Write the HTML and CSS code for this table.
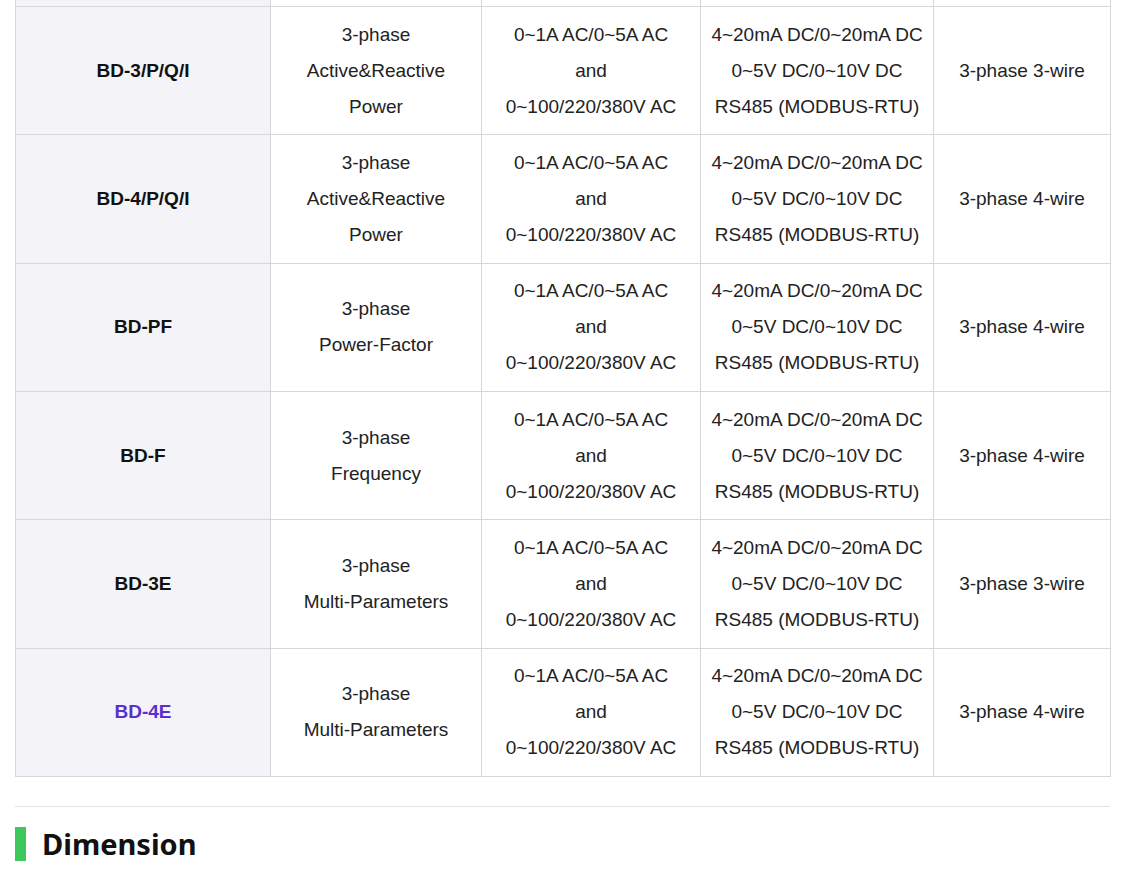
FILE: index.html
```html
<!DOCTYPE html>
<html>
<head>
<meta charset="utf-8">
<link rel="stylesheet" href="styles.css">
</head>
<body>
<div class="page">
  <table class="spec">
    <colgroup>
      <col class="c1"><col class="c2"><col class="c3"><col class="c4"><col class="c5">
    </colgroup>
    <tbody>
      <tr class="cut"><td class="model"></td><td></td><td></td><td></td><td></td></tr>
      <tr>
        <td class="model">BD-3/P/Q/I</td>
        <td>3-phase<br>Active&amp;Reactive<br>Power</td>
        <td>0~1A AC/0~5A AC<br>and<br>0~100/220/380V AC</td>
        <td>4~20mA DC/0~20mA DC<br>0~5V DC/0~10V DC<br>RS485 (MODBUS-RTU)</td>
        <td>3-phase 3-wire</td>
      </tr>
      <tr>
        <td class="model">BD-4/P/Q/I</td>
        <td>3-phase<br>Active&amp;Reactive<br>Power</td>
        <td>0~1A AC/0~5A AC<br>and<br>0~100/220/380V AC</td>
        <td>4~20mA DC/0~20mA DC<br>0~5V DC/0~10V DC<br>RS485 (MODBUS-RTU)</td>
        <td>3-phase 4-wire</td>
      </tr>
      <tr>
        <td class="model">BD-PF</td>
        <td>3-phase<br>Power-Factor</td>
        <td>0~1A AC/0~5A AC<br>and<br>0~100/220/380V AC</td>
        <td>4~20mA DC/0~20mA DC<br>0~5V DC/0~10V DC<br>RS485 (MODBUS-RTU)</td>
        <td>3-phase 4-wire</td>
      </tr>
      <tr>
        <td class="model">BD-F</td>
        <td>3-phase<br>Frequency</td>
        <td>0~1A AC/0~5A AC<br>and<br>0~100/220/380V AC</td>
        <td>4~20mA DC/0~20mA DC<br>0~5V DC/0~10V DC<br>RS485 (MODBUS-RTU)</td>
        <td>3-phase 4-wire</td>
      </tr>
      <tr>
        <td class="model">BD-3E</td>
        <td>3-phase<br>Multi-Parameters</td>
        <td>0~1A AC/0~5A AC<br>and<br>0~100/220/380V AC</td>
        <td>4~20mA DC/0~20mA DC<br>0~5V DC/0~10V DC<br>RS485 (MODBUS-RTU)</td>
        <td>3-phase 3-wire</td>
      </tr>
      <tr>
        <td class="model"><a class="link" href="#">BD-4E</a></td>
        <td>3-phase<br>Multi-Parameters</td>
        <td>0~1A AC/0~5A AC<br>and<br>0~100/220/380V AC</td>
        <td>4~20mA DC/0~20mA DC<br>0~5V DC/0~10V DC<br>RS485 (MODBUS-RTU)</td>
        <td>3-phase 4-wire</td>
      </tr>
    </tbody>
  </table>
  <hr class="divider">
  <h2 class="section-title">Dimension</h2>
</div>
</body>
</html>
```

FILE: styles.css
```css
html, body {
  margin: 0;
  padding: 0;
  background: #ffffff;
}

.page {
  padding: 0 15px;
  font-family: "Liberation Sans", Arial, sans-serif;
  color: #222222;
}

.spec {
  width: 1095px;
  border-collapse: collapse;
  table-layout: fixed;
  font-size: 19px;
  line-height: 36px;
}

.c1 { width: 255px; }
.c2 { width: 211px; }
.c3 { width: 219px; }
.c4 { width: 233px; }
.c5 { width: 177px; }

.spec td {
  border: 1px solid #d6d6dc;
  padding: 9.67px 8px;
  text-align: center;
  vertical-align: middle;
  color: #222222;
}

.spec .cut td {
  border-top: none;
  padding: 0;
  height: 6px;
  line-height: 0;
}

.spec td.model {
  background: #f3f3f8;
  font-weight: 700;
  color: #111111;
}

.link {
  color: #5a2fd0;
  text-decoration: none;
}

.divider {
  border: none;
  border-top: 1px solid #e3e3e6;
  margin: 29px 0 0 0;
  height: 0;
}

.section-title {
  margin: 19px 0 0 0;
  display: flex;
  align-items: center;
  gap: 16px;
  font-family: "Noto Sans", Inter, sans-serif;
  font-weight: 700;
  font-size: 29px;
  line-height: 36px;
  color: #111111;
}

.section-title::before {
  content: "";
  display: block;
  width: 11px;
  height: 34px;
  background: #3cc85a;
}
```
